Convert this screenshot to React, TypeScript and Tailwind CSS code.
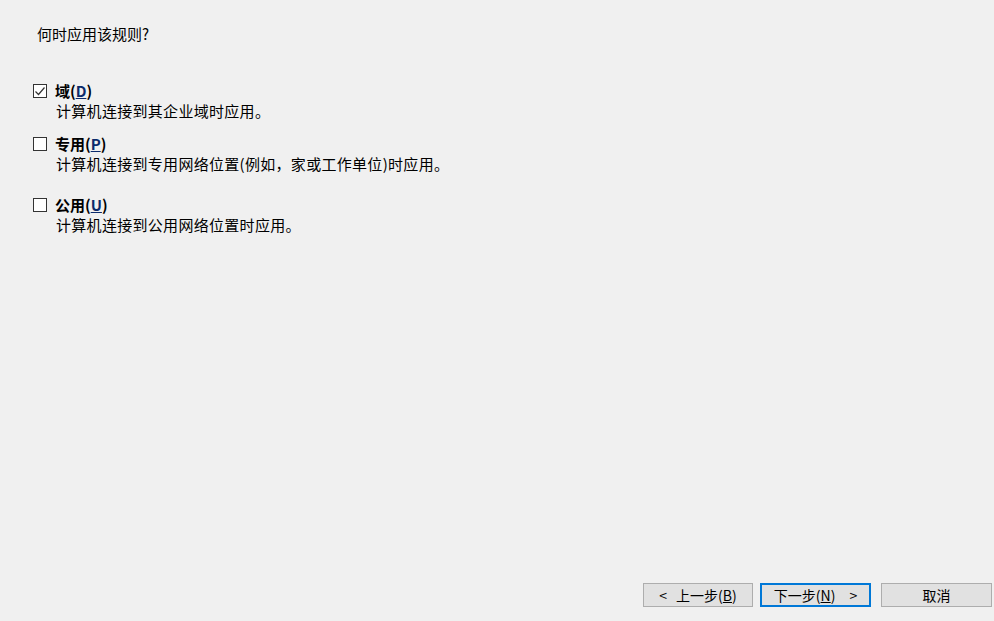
import React from "react";

const font = { fontFamily: '"Noto Sans CJK SC", "Microsoft YaHei", sans-serif' };

function Box({ checked }: { checked?: boolean }) {
  return (
    <div className="w-[14px] h-[14px] border border-[#333333] bg-white flex items-center justify-center shrink-0">
      {checked && (
        <svg width="12" height="12" viewBox="0 0 12 12">
          <path d="M1.5 6.5 L4.5 9.5 L10.5 2.5" fill="none" stroke="#333" strokeWidth="1.2" />
        </svg>
      )}
    </div>
  );
}

function Option({
  checked,
  name,
  key2,
  desc,
  className,
}: {
  checked?: boolean;
  name: string;
  key2: string;
  desc: string;
  className?: string;
}) {
  return (
    <div className={"flex pl-[33px] " + (className ?? "")}>
      <div className="pt-[2px]">
        <Box checked={checked} />
      </div>
      <div className="ml-[8px] flex flex-col">
        <div className="leading-[18px] text-[15px] font-bold text-black">
          {name}(<span className="underline text-[#0b2a6b]">{key2}</span>)
        </div>
        <div className="ml-[1px] leading-[22px] text-[15px] tracking-[0.3px] text-black">{desc}</div>
      </div>
    </div>
  );
}

export default function App() {
  return (
    <div className="w-[994px] h-[621px] bg-[#f0f0f0] flex flex-col text-black" style={font}>
      <div className="pt-[24px] pl-[37px] text-[15px] leading-[20px]">何时应用该规则?</div>
      <Option className="mt-[38px]" checked name="域" key2="D" desc="计算机连接到其企业域时应用。" />
      <Option className="mt-[13px]" name="专用" key2="P" desc="计算机连接到专用网络位置(例如，家或工作单位)时应用。" />
      <Option className="mt-[21px]" name="公用" key2="U" desc="计算机连接到公用网络位置时应用。" />
      <div className="flex-1" />
      <div className="flex justify-end pr-[2px] pb-[14px] text-[14px]">
        <button className="w-[110px] h-[24px] bg-[#e1e1e1] border border-[#adadad] flex items-center justify-center leading-none">
          <span className="mr-[9px]">&lt;</span>上一步(<span className="underline">B</span>)
        </button>
        <button className="ml-[7px] w-[111px] h-[24px] bg-[#e1e1e1] border-2 border-[#0078d7] flex items-center justify-center leading-none">
          下一步(<span className="underline">N</span>)<span className="ml-[14px]">&gt;</span>
        </button>
        <button className="ml-[10px] w-[111px] h-[24px] bg-[#e1e1e1] border border-[#adadad] flex items-center justify-center leading-none">
          取消
        </button>
      </div>
    </div>
  );
}
